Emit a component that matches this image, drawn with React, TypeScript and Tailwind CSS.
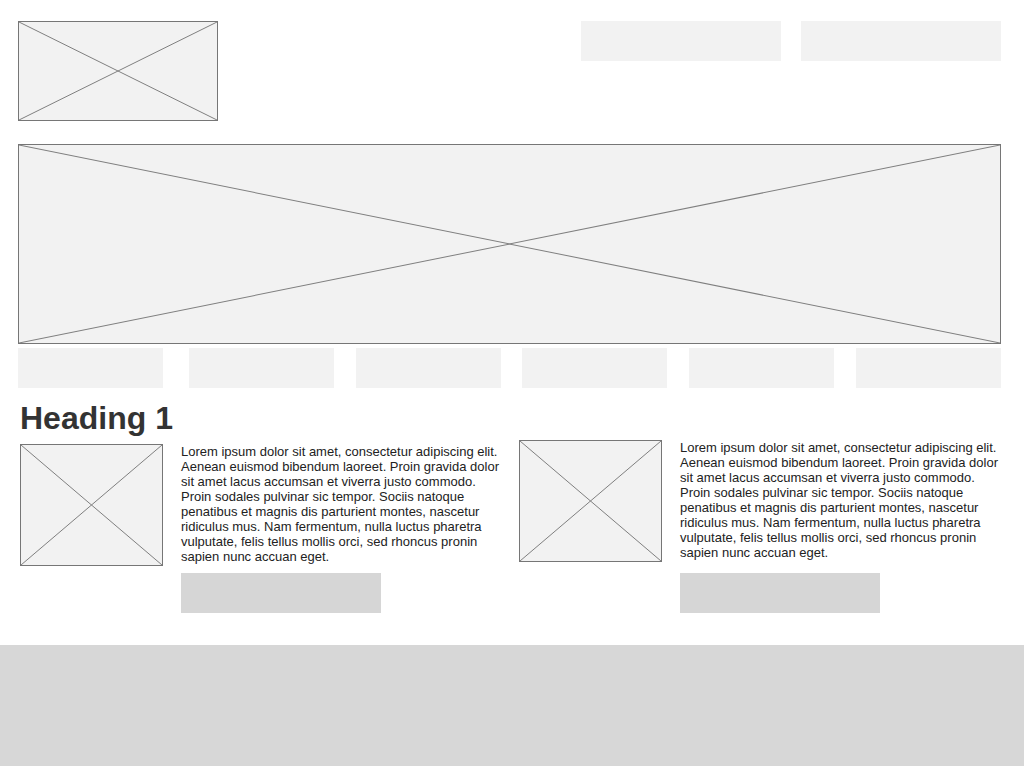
const Placeholder = ({ className = "" }: { className?: string }) => (
  <div className={`relative shrink-0 border border-[#767676] bg-[#f2f2f2] ${className}`}>
    <svg
      className="absolute inset-0 h-full w-full"
      viewBox="0 0 100 100"
      preserveAspectRatio="none"
    >
      <line x1="0" y1="0" x2="100" y2="100" stroke="#7f7f7f" strokeWidth="1" vectorEffect="non-scaling-stroke" />
      <line x1="100" y1="0" x2="0" y2="100" stroke="#7f7f7f" strokeWidth="1" vectorEffect="non-scaling-stroke" />
    </svg>
  </div>
);

const lorem =
  "Lorem ipsum dolor sit amet, consectetur adipiscing elit. Aenean euismod bibendum laoreet. Proin gravida dolor sit amet lacus accumsan et viverra justo commodo. Proin sodales pulvinar sic tempor. Sociis natoque penatibus et magnis dis parturient montes, nascetur ridiculus mus. Nam fermentum, nulla luctus pharetra vulputate, felis tellus mollis orci, sed rhoncus pronin sapien nunc accuan eget.";

const App = () => {
  const navItems = [0, 1, 2, 3, 4, 5];

  return (
    <div className="flex min-h-[766px] flex-col bg-white font-['Liberation_Sans',Arial,sans-serif]">
      <div className="pl-[18px] pr-[23px] pt-[21px]">
        {/* header */}
        <header className="flex items-start justify-between">
          <Placeholder className="h-[100px] w-[200px]" />
          <div className="flex gap-5">
            <div className="h-10 w-[200px] bg-[#f2f2f2]" />
            <div className="h-10 w-[200px] bg-[#f2f2f2]" />
          </div>
        </header>

        {/* hero */}
        <Placeholder className="mt-[23px] h-[200px] w-full" />

        {/* nav */}
        <nav className="mt-1 flex justify-between">
          {navItems.map((i) => (
            <div
              key={i}
              className={`h-10 w-[145px] shrink-0 bg-[#f2f2f2] ${i === 0 ? "mr-1" : ""}`}
            />
          ))}
        </nav>

        <h1 className="ml-[2px] mt-3 text-[32px] font-bold leading-9 text-[#333333]">Heading 1</h1>

        {/* cards */}
        <div className="mt-1 flex items-start">
          <div className="ml-[2px] flex w-[499px] shrink-0 items-start gap-[18px]">
            <Placeholder className="mt-1 h-[122px] w-[143px]" />
            <div className="mt-1 w-[322px] shrink-0">
              <p className="text-[13px] leading-[15px] text-[#222222]">{lorem}</p>
              <div className="mt-[9px] h-10 w-[200px] bg-[#d6d6d6]" />
            </div>
          </div>
          <div className="flex shrink-0 items-start gap-[18px]">
            <Placeholder className="h-[122px] w-[143px]" />
            <div className="w-[322px] shrink-0">
              <p className="text-[13px] leading-[15px] text-[#222222]">{lorem}</p>
              <div className="mt-[13px] h-10 w-[200px] bg-[#d6d6d6]" />
            </div>
          </div>
        </div>
      </div>

      <footer className="mt-8 h-[121px] bg-[#d7d7d7]" />
    </div>
  );
};

export default App;
